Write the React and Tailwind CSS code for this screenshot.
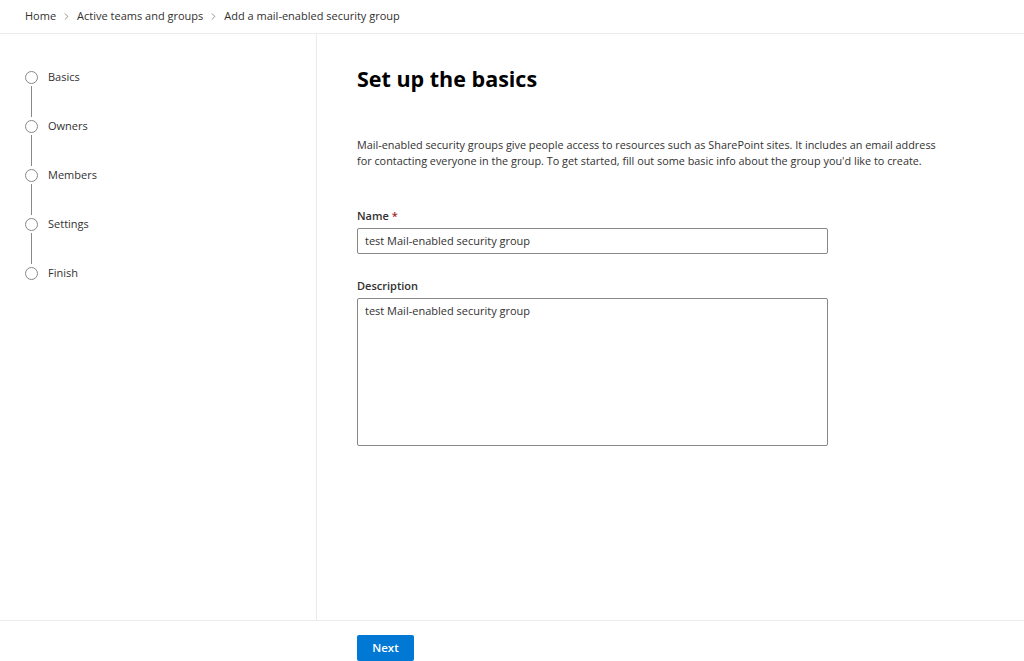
import { ChevronRight } from 'lucide-react'

const steps = ['Basics', 'Owners', 'Members', 'Settings', 'Finish']

function App() {
  return (
    <div
      className="flex h-[661px] w-[1024px] flex-col overflow-hidden bg-white text-[#323130]"
      style={{ fontFamily: '"Segoe UI", "Open Sans", sans-serif' }}
    >
      {/* Breadcrumb */}
      <div className="flex h-[34px] shrink-0 items-center border-b border-[#edebe9] pl-[25px] text-[11px] text-[#323130]">
        <span>Home</span>
        <ChevronRight className="mx-[5px] h-[11px] w-[11px] text-[#605e5c]" strokeWidth={1.5} />
        <span>Active teams and groups</span>
        <ChevronRight className="mx-[5px] h-[11px] w-[11px] text-[#605e5c]" strokeWidth={1.5} />
        <span>Add a mail-enabled security group</span>
      </div>

      <div className="flex min-h-0 flex-1">
        {/* Steps */}
        <div className="w-[317px] shrink-0 border-r border-[#edebe9] pl-[25px] pt-[36px]">
          {steps.map((s, i) => (
            <div key={s}>
              <div className="flex h-[14px] items-center">
                <span className="h-[13px] w-[13px] rounded-full border-[1.5px] border-[#8a8886]" />
                <span className="ml-[10px] text-[11px] text-[#323130]">{s}</span>
              </div>
              {i < steps.length - 1 && (
                <div className="ml-[6px] my-[2px] h-[31px] w-px bg-[#8a8886]" />
              )}
            </div>
          ))}
        </div>

        {/* Form */}
        <div className="flex-1 pl-[40px] pt-[30px]">
          <h1 className="text-[21.5px] font-bold leading-[30px] text-black">Set up the basics</h1>
          <p className="mt-[43px] w-[620px] text-[10.85px] leading-[16px] text-[#323130]">
            Mail-enabled security groups give people access to resources such as SharePoint sites. It includes an email address
            <br />
            for contacting everyone in the group. To get started, fill out some basic info about the group you'd like to create.
          </p>

          <label className="mt-[38px] block text-[11px] font-semibold leading-[18px]">
            Name <span className="text-[#a4262c]">*</span>
          </label>
          <div className="mt-[3px] flex h-[26px] w-[471px] items-center rounded-[2px] border border-[#8a8886] px-[7px] text-[11px]">
            test Mail-enabled security group
          </div>

          <label className="mt-[23px] block text-[11px] font-semibold leading-[18px]">Description</label>
          <div className="mt-[3px] h-[148px] w-[471px] rounded-[2px] border border-[#8a8886] px-[7px] pt-[4px] text-[11px]">
            test Mail-enabled security group
          </div>
        </div>
      </div>

      {/* Footer */}
      <div className="flex h-[41px] shrink-0 items-start border-t border-[#edebe9] pl-[357px] pt-[14px]">
        <button className="h-[26px] w-[57px] rounded-[2px] bg-[#0078d4] text-[11.5px] font-semibold text-white">
          Next
        </button>
      </div>
    </div>
  )
}

export default App
